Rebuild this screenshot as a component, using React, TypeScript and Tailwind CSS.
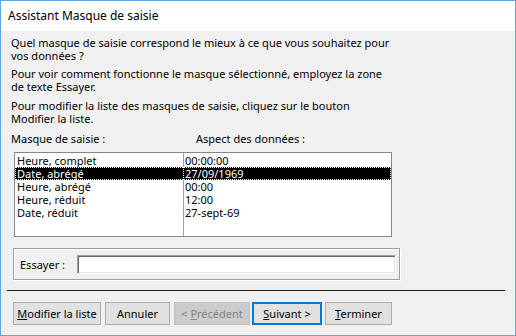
import React from "react";

type Row = { mask: string; sample: string; selected?: boolean };

const rows: Row[] = [
    { mask: "Heure, complet", sample: "00:00:00" },
    { mask: "Date, abrégé", sample: "27/09/1969", selected: true },
    { mask: "Heure, abrégé", sample: "00:00" },
    { mask: "Heure, réduit", sample: "12:00" },
    { mask: "Date, réduit", sample: "27-sept-69" },
];

const font = { fontFamily: '"Segoe UI", "Noto Sans", sans-serif' };

type BtnProps = { children: React.ReactNode; className?: string; disabled?: boolean; primary?: boolean };

const DlgButton: React.FC<BtnProps> = ({ children, className, disabled, primary }) => {
    let look = "bg-[#e1e1e1] border border-[#adadad] text-black";
    if (disabled) look = "bg-[#cccccc] border border-[#bfbfbf] text-[#838383]";
    if (primary) look = "bg-[#e1e1e1] border-2 border-[#0078d7] text-black";
    return (
        <div className={`h-[23px] flex items-center justify-center text-[11px] leading-none whitespace-nowrap ${look} ${className ?? ""}`}>
            {children}
        </div>
    );
};

export default function App() {
    return (
        <div style={font} className="w-[516px] h-[336px] border border-[#5fa8e3] bg-[#f0f0f0] flex flex-col text-black overflow-hidden">
            <div className="h-[30px] bg-white flex items-center pl-[7px] text-[12px] shrink-0">Assistant Masque de saisie</div>

            <div className="flex flex-col text-[11px] leading-[13px] whitespace-nowrap">
                <p className="mt-[5px] pl-[10px]">
                    Quel masque de saisie correspond le mieux à ce que vous souhaitez pour
                    <br />
                    vos données ?
                </p>
                <p className="mt-[5px] pl-[10px]">
                    Pour voir comment fonctionne le masque sélectionné, employez la zone
                    <br />
                    de texte Essayer.
                </p>
                <p className="mt-[6px] pl-[10px]">
                    Pour modifier la liste des masques de saisie, cliquez sur le bouton
                    <br />
                    Modifier la liste.
                </p>

                <div className="mt-[7px] flex">
                    <div className="pl-[10px] w-[195px]">Masque de saisie :</div>
                    <div>Aspect des données :</div>
                </div>

                <div className="ml-[13px] mt-[7px] w-[378px] h-[85px] border border-[#828790] bg-white flex flex-col">
                    <div className="h-[1px] flex">
                        <div className="w-[168px]" />
                        <div className="border-l border-[#a0a0a0]" />
                    </div>
                    {rows.map((r) => (
                        <div
                            key={r.mask}
                            className={
                                r.selected
                                    ? "h-[13px] flex bg-black text-white outline-1 outline-dotted outline-white -outline-offset-1"
                                    : "h-[13px] flex"
                            }>
                            <div className="w-[168px] pl-[2px]">{r.mask}</div>
                            <div className={r.selected ? "grow pl-[1px] border-l border-dotted border-white" : "grow pl-[1px] border-l border-[#a0a0a0]"}>
                                {r.sample}
                            </div>
                        </div>
                    ))}
                    <div className="grow flex">
                        <div className="w-[168px]" />
                        <div className="border-l border-[#a0a0a0]" />
                    </div>
                </div>

                <div className="ml-[12px] mt-[11px] w-[387px] h-[32px] border border-[#a0a0a0] shadow-[inset_1px_1px_0_#ffffff,1px_1px_0_#ffffff] flex items-center">
                    <div className="pl-[6px] w-[63px]">Essayer :</div>
                    <div className="w-[319px] h-[19px] bg-white border border-t-[#a0a0a0] border-l-[#a0a0a0] border-r-white border-b-white shadow-[inset_1px_1px_0_#696969,inset_-1px_-1px_0_#e3e3e3]" />
                </div>
            </div>

            <div className="ml-[6px] mt-[10px] w-[498px] h-[1px] bg-[#1e1e1e]" />

            <div className="mt-[11px] flex">
                <DlgButton className="ml-[12px] w-[88px]">
                    <span><u>M</u>odifier la liste</span>
                </DlgButton>
                <DlgButton className="ml-[4px] w-[65px]">Annuler</DlgButton>
                <DlgButton disabled className="ml-[4px] w-[76px]">
                    <span>&lt; <u>P</u>récédent</span>
                </DlgButton>
                <DlgButton primary className="ml-[2px] w-[70px]">
                    <span><u>S</u>uivant &gt;</span>
                </DlgButton>
                <DlgButton className="ml-[3px] w-[67px]">
                    <span><u>T</u>erminer</span>
                </DlgButton>
            </div>
        </div>
    );
}
